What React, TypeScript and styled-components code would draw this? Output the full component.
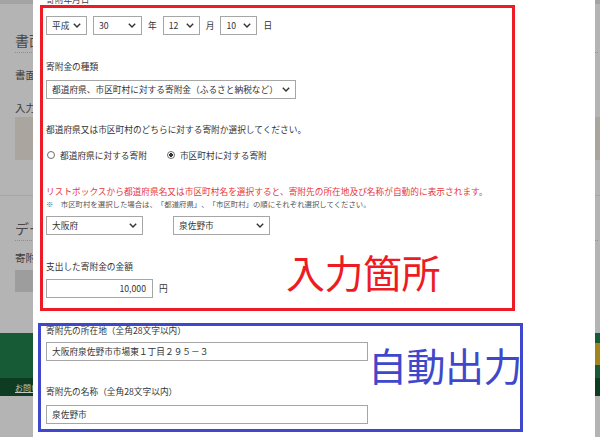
import React from "react";
import styled, { createGlobalStyle } from "styled-components";

const Global = createGlobalStyle`
  html, body { margin: 0; padding: 0; background: #ffffff; }
  body {
    width: 600px; height: 444px; overflow: hidden;
    font-family: "Noto Sans CJK JP", "Noto Sans", sans-serif;
    color: #333333;
    text-spacing-trim: space-all;
  }
  * { box-sizing: border-box; }
`;

const Page = styled.div`
  position: relative;
  width: 600px;
  height: 444px;
  background: #ffffff;
`;

/* ---------- background page (dimmed behind the dialog) ---------- */
const Backdrop = styled.div`
  height: 437px;
  background: #b4b4b4;
  display: flex;
  flex-direction: column;
`;

const TopStrip = styled.div`
  height: 4px;
  background: #a3a3a3;
`;

const SectionTitle = styled.div<{ $mt: number }>`
  margin: ${(p) => p.$mt}px 0 0 15px;
  font-size: 14px;
  line-height: 18px;
  color: #474747;
  white-space: nowrap;
`;

const DottedRule = styled.div`
  margin: 3px 2px 0 15px;
  border-top: 1px dotted #a38b66;
`;

const SmallText = styled.div<{ $mt: number }>`
  margin: ${(p) => p.$mt}px 0 0 15px;
  font-size: 10.5px;
  line-height: 14px;
  color: #3e3e3e;
  white-space: nowrap;
`;

const ShadeBox = styled.div<{ $mt: number; $h: number; $w?: number; $bg: string }>`
  margin: ${(p) => p.$mt}px 0 0 15px;
  height: ${(p) => p.$h}px;
  width: ${(p) => (p.$w ? `${p.$w}px` : "auto")};
  background: ${(p) => p.$bg};
`;

const Rule = styled.div<{ $mt: number }>`
  margin-top: ${(p) => p.$mt}px;
  border-top: 1px solid #a6a6a6;
`;

const Footer = styled.div`
  margin-top: 41px;
  height: 45px;
  background: #175a36;
  display: flex;
  justify-content: flex-end;
  align-items: flex-start;
  padding-top: 10px;
`;

const GoldButton = styled.div`
  width: 14px;
  height: 22px;
  background: #a3841a;
`;

const FooterBottom = styled.div`
  height: 18px;
  background: #0e3c23;
  display: flex;
  align-items: center;
  padding-left: 15px;
`;

const FooterLink = styled.span`
  font-size: 8px;
  color: #bfcac2;
  text-decoration: underline;
  white-space: nowrap;
`;

/* ---------- dialog ---------- */
const Modal = styled.div`
  position: absolute;
  left: 33px;
  top: 0;
  width: 562px;
  height: 444px;
  background: #ffffff;
  overflow: hidden;
  display: flex;
  flex-direction: column;
`;

const TopLabel = styled.div`
  margin: -6px 0 0 13px;
  font-size: 8.7px;
  line-height: 11px;
  color: #444;
`;

const RedFrame = styled.div`
  margin: 0 0 0 7px;
  width: 475px;
  border: 3px solid #ed1c24;
  padding: 8px 0 10px 3px;
  display: flex;
  flex-direction: column;
`;

const BlueFrame = styled.div`
  margin: 12px 0 0 5px;
  width: 485px;
  border: 3px solid #3f48cc;
  padding: 0 0 5px 5px;
  display: flex;
  align-items: flex-start;
`;

const Row = styled.div<{ $mt?: number; $gap?: number }>`
  margin-top: ${(p) => p.$mt ?? 0}px;
  display: flex;
  align-items: center;
  gap: ${(p) => p.$gap ?? 6}px;
`;

const Label = styled.div<{ $mt?: number; $lh?: number }>`
  margin-top: ${(p) => p.$mt ?? 0}px;
  font-size: 8.7px;
  line-height: ${(p) => p.$lh ?? 12}px;
  color: #333;
  white-space: nowrap;
`;

const Alert = styled(Label)`
  color: #e8383a;
`;

const Note = styled.div<{ $mt?: number }>`
  margin-top: ${(p) => p.$mt ?? 0}px;
  font-size: 7.4px;
  line-height: 10px;
  color: #555;
  white-space: nowrap;
`;

const Unit = styled.span`
  font-size: 8.7px;
  color: #333;
`;

const SelectBox = styled.div<{ $w: number }>`
  width: ${(p) => p.$w}px;
  height: 19px;
  border: 1px solid #a6a6a6;
  background: #fff;
  display: flex;
  align-items: center;
  justify-content: space-between;
  padding: 0 5px 0 5px;
  font-size: 8.7px;
  color: #333;
  white-space: nowrap;
`;

const Field = styled.input<{ $w: number; $align?: string }>`
  width: ${(p) => p.$w}px;
  height: 19px;
  margin: 0;
  border: 1px solid #a6a6a6;
  background: #fff;
  padding: 0 6px 0 5px;
  font-family: "Noto Sans CJK JP", "Noto Sans", sans-serif;
  font-size: 8.7px;
  color: #333;
  text-align: ${(p) => p.$align ?? "left"};
  outline: none;
`;

const RadioGroup = styled.div<{ $mt?: number }>`
  margin: ${(p) => p.$mt ?? 0}px 0 0 1px;
  display: flex;
  align-items: center;
  gap: 20px;
  height: 12px;
`;

const RadioItem = styled.label`
  display: flex;
  align-items: center;
  gap: 5px;
  font-size: 8.7px;
  color: #333;
  white-space: nowrap;
`;

const RadioDot = styled.span<{ $on?: boolean }>`
  width: 8px;
  height: 8px;
  border-radius: 50%;
  border: 1px solid #6e6e6e;
  background: ${(p) => (p.$on ? "radial-gradient(circle, #333 0 1.6px, #fff 2px)" : "#fff")};
`;

const AmountRow = styled.div`
  margin-top: 26px;
  display: flex;
  align-items: flex-start;
`;

const Stack = styled.div<{ $w: number }>`
  width: ${(p) => p.$w}px;
  display: flex;
  flex-direction: column;
`;

const Annotation = styled.div<{ $color: string; $mt?: number }>`
  margin-top: ${(p) => p.$mt ?? 0}px;
  font-size: 39px;
  line-height: 39px;
  height: 31px;
  font-weight: 400;
  color: ${(p) => p.$color};
  white-space: nowrap;
  letter-spacing: -0.5px;
`;

const Chevron = () => (
  <svg width="8" height="5" viewBox="0 0 8 5">
    <polyline points="0.8,0.8 4,4 7.2,0.8" fill="none" stroke="#333" strokeWidth="1.4" />
  </svg>
);

const Select = ({ w, value }: { w: number; value: string }) => (
  <SelectBox $w={w}>
    <span>{value}</span>
    <Chevron />
  </SelectBox>
);

export default function App() {
  return (
    <>
      <Global />
      <Page>
        <Backdrop>
          <TopStrip />
          <SectionTitle $mt={27}>書面作成の準備</SectionTitle>
          <DottedRule />
          <SmallText $mt={15}>書面で提出する申告書を作成します。</SmallText>
          <SmallText $mt={19}>入力内容を確認してください。</SmallText>
          <ShadeBox $mt={2} $h={43} $bg="#aaa69f" />
          <Rule $mt={35} />
          <SectionTitle $mt={23}>データの保存</SectionTitle>
          <DottedRule />
          <SmallText $mt={10}>寄附金の入力内容</SmallText>
          <ShadeBox $mt={5} $h={22} $w={200} $bg="#9d9d9d" />
          <Footer>
            <GoldButton />
          </Footer>
          <FooterBottom>
            <FooterLink>お問い合わせ</FooterLink>
          </FooterBottom>
        </Backdrop>

        <Modal>
          <TopLabel>寄附年月日</TopLabel>
          <RedFrame>
            <Row>
              <Select w={41} value="平成" />
              <Select w={49} value="30" />
              <Unit>年</Unit>
              <Select w={37} value="12" />
              <Unit>月</Unit>
              <Select w={37} value="10" />
              <Unit>日</Unit>
            </Row>

            <Label $mt={26}>寄附金の種類</Label>
            <Row $mt={7}>
              <Select w={250} value="都道府県、市区町村に対する寄附金（ふるさと納税など）" />
            </Row>

            <Label $mt={25}>都道府県又は市区町村のどちらに対する寄附か選択してください。</Label>
            <RadioGroup $mt={13}>
              <RadioItem>
                <RadioDot />
                都道府県に対する寄附
              </RadioItem>
              <RadioItem>
                <RadioDot $on />
                市区町村に対する寄附
              </RadioItem>
            </RadioGroup>

            <Alert $mt={25}>
              リストボックスから都道府県名又は市区町村名を選択すると、寄附先の所在地及び名称が自動的に表示されます。
            </Alert>
            <Note $mt={1}>※　市区町村を選択した場合は、「都道府県」、「市区町村」の順にそれぞれ選択してください。</Note>
            <Row $mt={7} $gap={30}>
              <Select w={97} value="大阪府" />
              <Select w={97} value="泉佐野市" />
            </Row>

            <AmountRow>
              <Stack $w={240}>
                <Label>支出した寄附金の金額</Label>
                <Row $mt={6}>
                  <Field $w={107} $align="right" readOnly value="10,000" />
                  <Unit>円</Unit>
                </Row>
              </Stack>
              <Annotation $color="#ed1c24" $mt={-9}>入力箇所</Annotation>
            </AmountRow>
          </RedFrame>

          <BlueFrame>
            <Stack $w={322}>
              <Label $lh={10}>寄附先の所在地（全角28文字以内）</Label>
              <Row $mt={6}>
                <Field $w={322} readOnly value="大阪府泉佐野市市場東１丁目２９５－３" />
              </Row>
              <Label $mt={26} $lh={10}>寄附先の名称（全角28文字以内）</Label>
              <Row $mt={8}>
                <Field $w={322} readOnly value="泉佐野市" />
              </Row>
            </Stack>
            <Annotation $color="#3f48cc" $mt={19}>自動出力</Annotation>
          </BlueFrame>
        </Modal>
      </Page>
    </>
  );
}
